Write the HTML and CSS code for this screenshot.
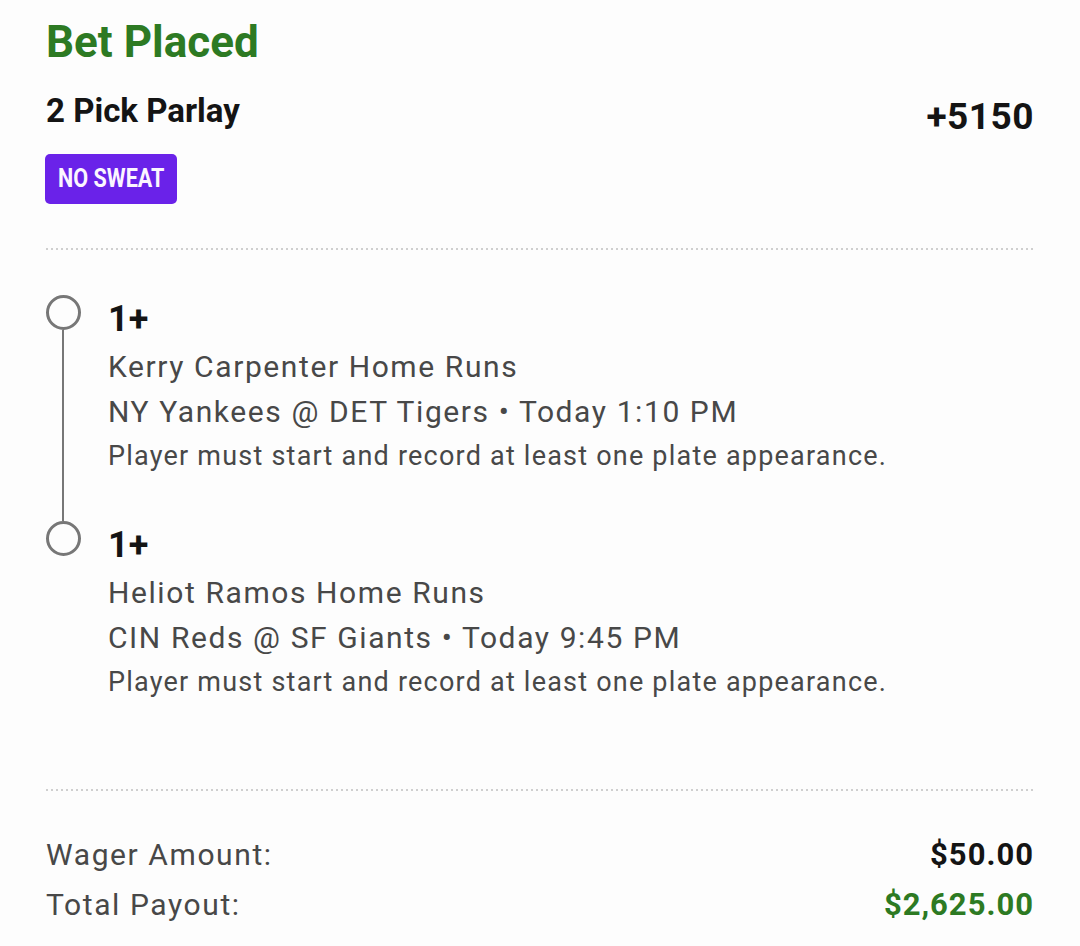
FILE: index.html
```html
<!DOCTYPE html>
<html>
<head>
<meta charset="utf-8">
<link rel="stylesheet" href="styles.css">
</head>
<body>
<main class="bet">
  <h1 class="title">Bet Placed</h1>
  <div class="summary">
    <div class="parlay">2 Pick Parlay</div>
    <div class="odds">+5150</div>
  </div>
  <div class="badge"><span class="badge-text">NO SWEAT</span></div>
  <div class="divider first"></div>
  <section class="legs">
    <div class="leg">
      <div class="rail">
        <div class="dot"></div>
        <div class="connector"></div>
      </div>
      <div class="leg-body">
        <div class="pick">1+</div>
        <div class="market">Kerry Carpenter Home Runs</div>
        <div class="game">NY Yankees @ DET Tigers • Today 1:10 PM</div>
        <div class="rule">Player must start and record at least one plate appearance.</div>
      </div>
    </div>
    <div class="leg last">
      <div class="rail">
        <div class="dot"></div>
      </div>
      <div class="leg-body">
        <div class="pick">1+</div>
        <div class="market">Heliot Ramos Home Runs</div>
        <div class="game">CIN Reds @ SF Giants • Today 9:45 PM</div>
        <div class="rule">Player must start and record at least one plate appearance.</div>
      </div>
    </div>
  </section>
  <div class="divider second"></div>
  <div class="totals">
    <div class="row"><span class="label">Wager Amount:</span><span class="amount">$50.00</span></div>
    <div class="row"><span class="label">Total Payout:</span><span class="amount payout">$2,625.00</span></div>
  </div>
</main>
</body>
</html>
```

FILE: styles.css
```css
* { box-sizing: border-box; }
html, body { margin: 0; padding: 0; background: #fdfdfd; }
body {
  font-family: Roboto, "Noto Sans", sans-serif;
  color: #141414;
  width: 1080px;
  height: 946px;
  overflow: hidden;
}
.bet {
  padding: 16px 46px 0 46px;
}
.title {
  margin: 0;
  font-size: 44px;
  line-height: 52px;
  font-weight: 700;
  color: #2d7a23;
}
.summary {
  margin-top: 22px;
  display: flex;
  justify-content: space-between;
  align-items: baseline;
}
.parlay {
  font-size: 33px;
  line-height: 40px;
  font-weight: 700;
}
.odds {
  font-size: 37px;
  line-height: 40px;
  font-weight: 700;
  position: relative;
  top: 7px;
  letter-spacing: 0.5px;
}
.badge {
  margin-top: 23px;
  display: inline-flex;
  align-items: center;
  justify-content: center;
  width: 132px;
  height: 50px;
  margin-left: -1px;
  background: #6a22e9;
  border-radius: 5px;
}
.badge-text {
  display: inline-block;
  font-family: Roboto, sans-serif;
  font-weight: 700;
  font-size: 22px;
  line-height: 1;
  color: #fbf6ff;
  letter-spacing: 0;
  transform: scale(0.98, 1.15);
}
.divider {
  height: 2px;
  background-image: linear-gradient(to right, #cfcfcf 2px, transparent 2px);
  background-size: 5px 2px;
  background-repeat: repeat-x;
}
.divider.first { margin-top: 44px; }
.legs { margin-top: 45px; }
.leg {
  display: flex;
}
.leg:not(.last) .leg-body { padding-bottom: 42px; }
.rail {
  width: 62px;
  flex: none;
  display: flex;
  flex-direction: column;
  align-items: flex-start;
}
.dot {
  width: 35px;
  height: 35px;
  border: 3px solid #777;
  border-radius: 50%;
  flex: none;
}
.connector {
  flex: 1;
  width: 2px;
  margin-left: 16px;
  background: #777;
}
.leg-body { flex: 1; }
.pick {
  font-size: 36px;
  line-height: 49px;
  font-weight: 700;
  color: #141414;
}
.market, .game {
  font-size: 30px;
  line-height: 45px;
  color: #484848;
  letter-spacing: 0.053em;
}
.rule {
  font-size: 27px;
  line-height: 45px;
  color: #484848;
  letter-spacing: 0.045em;
}
.divider.second { margin-top: 84px; }
.totals { margin-top: 39px; }
.row {
  display: flex;
  justify-content: space-between;
  align-items: baseline;
  line-height: 50px;
}
.label {
  font-size: 30px;
  color: #484848;
  letter-spacing: 0.053em;
}
.amount {
  font-size: 31px;
  font-weight: 700;
  color: #141414;
  letter-spacing: 1px;
}
.amount.payout { color: #2d7a23; }
```
